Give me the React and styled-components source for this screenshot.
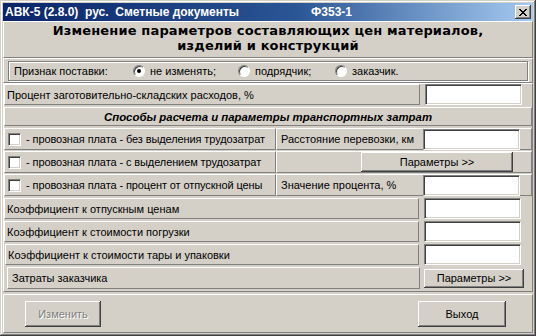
import React from 'react';
import styled, { createGlobalStyle, css } from 'styled-components';

const GlobalStyle = createGlobalStyle`
  html, body { margin: 0; padding: 0; background: #d4d0c8; }
  * { box-sizing: border-box; }
`

const raised = css`
  border-top: 1px solid #ffffff;
  border-left: 1px solid #ffffff;
  border-right: 1px solid #808080;
  border-bottom: 1px solid #808080;
`

const sunken = css`
  border-top: 1px solid #808080;
  border-left: 1px solid #808080;
  border-right: 1px solid #ffffff;
  border-bottom: 1px solid #ffffff;
  box-shadow: inset 1px 1px #404040, inset -1px -1px #d4d0c8;
`

const Window = styled.div`
  width: 536px;
  height: 336px;
  padding: 3px;
  background: #d4d0c8;
  box-shadow: inset -1px -1px #404040, inset 1px 1px #d4d0c8,
    inset -2px -2px #808080, inset 2px 2px #ffffff;
  font-family: "Liberation Sans", Arial, sans-serif;
  font-size: 11px;
  color: #000;
  display: flex;
  flex-direction: column;
`

const TitleBar = styled.div`
  height: 18px;
  background: linear-gradient(90deg, #0a246a 0%, #2a5595 55%, #a6caf0 100%);
  display: flex;
  align-items: center;
  padding: 0 2px 0 2px;
  color: #fff;
  font-weight: bold;
  font-size: 12px;
  white-space: pre;
`

const TitleText = styled.span`
  flex: 0 0 auto;
`

const TitleCode = styled.span`
  margin-left: 72px;
  flex: 1;
`

const CloseBtn = styled.div`
  width: 16px;
  height: 14px;
  background: #d4d0c8;
  box-shadow: inset -1px -1px #404040, inset 1px 1px #ffffff, inset -2px -2px #808080;
  display: flex;
  align-items: center;
  justify-content: center;
`

const HeaderPanel = styled.div`
  ${raised};
  height: 37px;
  display: flex;
  justify-content: center;
  align-items: flex-start;
  padding-top: 1px;
`

const HeaderTitle = styled.div`
  font-family: "DejaVu Sans", Verdana, sans-serif;
  font-weight: bold;
  font-size: 13px;
  line-height: 15px;
  text-align: center;
  letter-spacing: 0.15px;
`

const RadioPanel = styled.div`
  ${raised};
  padding: 2px 4px 1px 4px;
`

const RadioBox = styled.div`
  height: 20px;
  border: 1px solid #808080;
  box-shadow: inset 1px 1px #ffffff, 1px 1px #ffffff;
  display: flex;
  align-items: center;
  padding-left: 5px;
`

const RadioCaption = styled.span`
  width: 119px;
`

const RadioItem = styled.label`
  display: flex;
  align-items: center;
  gap: 5px;
  width: ${p => (p.$w ? `${p.$w}px` : 'auto')};
`

const RadioDot = styled.span`
  flex: 0 0 12px;
  height: 12px;
  border-radius: 50%;
  background: #fff;
  border: 1px solid;
  border-color: #808080 #ffffff #ffffff #808080;
  box-shadow: inset 1px 1px #404040;
  display: flex;
  align-items: center;
  justify-content: center;
  &::after {
    content: '';
    width: 4px;
    height: 4px;
    border-radius: 50%;
    background: ${p => (p.$on ? '#000' : 'transparent')};
  }
`

const Main = styled.div`
  ${raised};
  display: flex;
  flex-direction: column;
  gap: 2px;
  padding: 0 0 2px 0;
  flex: 0 0 auto;
`

const FieldRow = styled.div`
  display: flex;
  align-items: center;
  height: ${p => p.$h || 21}px;
  padding-left: ${p => p.$indent || 0}px;
`

const LabelCell = styled.div`
  ${raised};
  flex: 0 0 ${p => p.$w}px;
  height: ${p => p.$h || 21}px;
  display: flex;
  align-items: center;
  padding-left: ${p => p.$pad || 2}px;
  white-space: nowrap;
`

const TextInput = styled.div`
  ${sunken};
  flex: 0 0 97px;
  height: 21px;
  background: #fff;
  margin-left: ${p => p.$ml ?? 5}px;
`

const SectionHead = styled.div`
  ${raised};
  height: 19px;
  display: flex;
  align-items: center;
  justify-content: center;
  font-weight: bold;
  font-style: italic;
  font-size: 11.4px;
`

const TransportGrid = styled.div`
  display: grid;
  grid-template-columns: 272px 1fr;
  grid-auto-rows: 22px;
  row-gap: 1px;
`

const CheckCell = styled.div`
  ${raised};
  display: flex;
  align-items: center;
  gap: 5px;
  padding-left: 3px;
  white-space: nowrap;
  letter-spacing: -0.1px;
`

const CheckBox = styled.span`
  flex: 0 0 13px;
  height: 13px;
  background: #fff;
  ${sunken};
`

const ParamCell = styled.div`
  ${raised};
  display: flex;
  align-items: center;
  padding-left: 4px;
  justify-content: ${p => (p.$center ? 'flex-end' : 'flex-start')};
  padding-right: ${p => (p.$center ? 18 : 0)}px;
`

const ParamLabel = styled.span`
  flex: 0 0 142px;
  white-space: nowrap;
`

const Button = styled.button`
  font-family: "Liberation Sans", Arial, sans-serif;
  font-size: 11px;
  flex: 0 0 ${p => p.$w}px;
  width: ${p => p.$w}px;
  height: ${p => p.$h}px;
  background: #d4d0c8;
  border: none;
  padding: 0;
  color: ${p => (p.disabled ? '#808080' : '#000')};
  text-shadow: ${p => (p.disabled ? '1px 1px #ffffff' : 'none')};
  box-shadow: inset -1px -1px #404040, inset 1px 1px #ffffff, inset -2px -2px #808080;
  margin-left: ${p => p.$ml || 0}px;
`

const Footer = styled.div`
  ${raised};
  flex: 1;
  margin-top: 2px;
  display: flex;
  align-items: center;
  justify-content: space-between;
  padding: 0 26px 0 21px;
`

const transport = [
  { check: '- провозная плата - без выделения трудозатрат', label: 'Расстояние перевозки, км' },
  { check: '- провозная плата - с выделением трудозатрат', button: true },
  { check: '- провозная плата - процент от отпускной цены', label: 'Значение процента, %' },
]

const coeffs = [
  { text: 'Коэффициент к отпускным ценам', indent: 0, w: 415 },
  { text: 'Коэффициент к стоимости погрузки', indent: 0, w: 415 },
  { text: 'Коэффициент к стоимости тары и упаковки', indent: 1, w: 414 },
]

function CloseIcon() {
  return (
    <svg width="8" height="7" viewBox="0 0 8 7">
      <path d="M0 0 L7 7 M1 0 L8 7 M7 0 L0 7 M8 0 L1 7" stroke="#000" strokeWidth="1" />
    </svg>
  )
}

export default function App() {
  return (
    <Window>
      <GlobalStyle />
      <TitleBar>
        <TitleText>{'АВК-5 (2.8.0)  рус.  Сметные документы'}</TitleText>
        <TitleCode>Ф353-1</TitleCode>
        <CloseBtn><CloseIcon /></CloseBtn>
      </TitleBar>

      <HeaderPanel>
        <HeaderTitle>
          Изменение параметров составляющих цен материалов,<br />
          изделий и конструкций
        </HeaderTitle>
      </HeaderPanel>

      <RadioPanel>
        <RadioBox>
          <RadioCaption>Признак поставки:</RadioCaption>
          <RadioItem $w={105}><RadioDot $on />не изменять;</RadioItem>
          <RadioItem $w={97}><RadioDot />подрядчик;</RadioItem>
          <RadioItem><RadioDot />заказчик.</RadioItem>
        </RadioBox>
      </RadioPanel>

      <Main>
        <FieldRow>
          <LabelCell $w={416}>Процент заготовительно-складских расходов, %</LabelCell>
          <TextInput />
        </FieldRow>

        <SectionHead>Способы расчета и параметры транспортных затрат</SectionHead>

        <TransportGrid>
          {transport.map((t, i) => (
            <React.Fragment key={i}>
              <CheckCell><CheckBox />{t.check}</CheckCell>
              {t.button ? (
                <ParamCell $center>
                  <Button $w={152} $h={20}>Параметры &gt;&gt;</Button>
                </ParamCell>
              ) : (
                <ParamCell>
                  <ParamLabel>{t.label}</ParamLabel>
                  <TextInput $ml={0} />
                </ParamCell>
              )}
            </React.Fragment>
          ))}
        </TransportGrid>

        {coeffs.map((c, i) => (
          <FieldRow key={i} $indent={c.indent}>
            <LabelCell $w={c.w}>{c.text}</LabelCell>
            <TextInput />
          </FieldRow>
        ))}

        <FieldRow $h={22} $indent={3}>
          <LabelCell $w={413} $h={22} $pad={4}>Затраты заказчика</LabelCell>
          <Button $w={100} $h={19} $ml={4}>Параметры &gt;&gt;</Button>
        </FieldRow>
      </Main>

      <Footer>
        <Button $w={76} $h={26} disabled>Изменить</Button>
        <Button $w={88} $h={26}>Выход</Button>
      </Footer>
    </Window>
  )
}
